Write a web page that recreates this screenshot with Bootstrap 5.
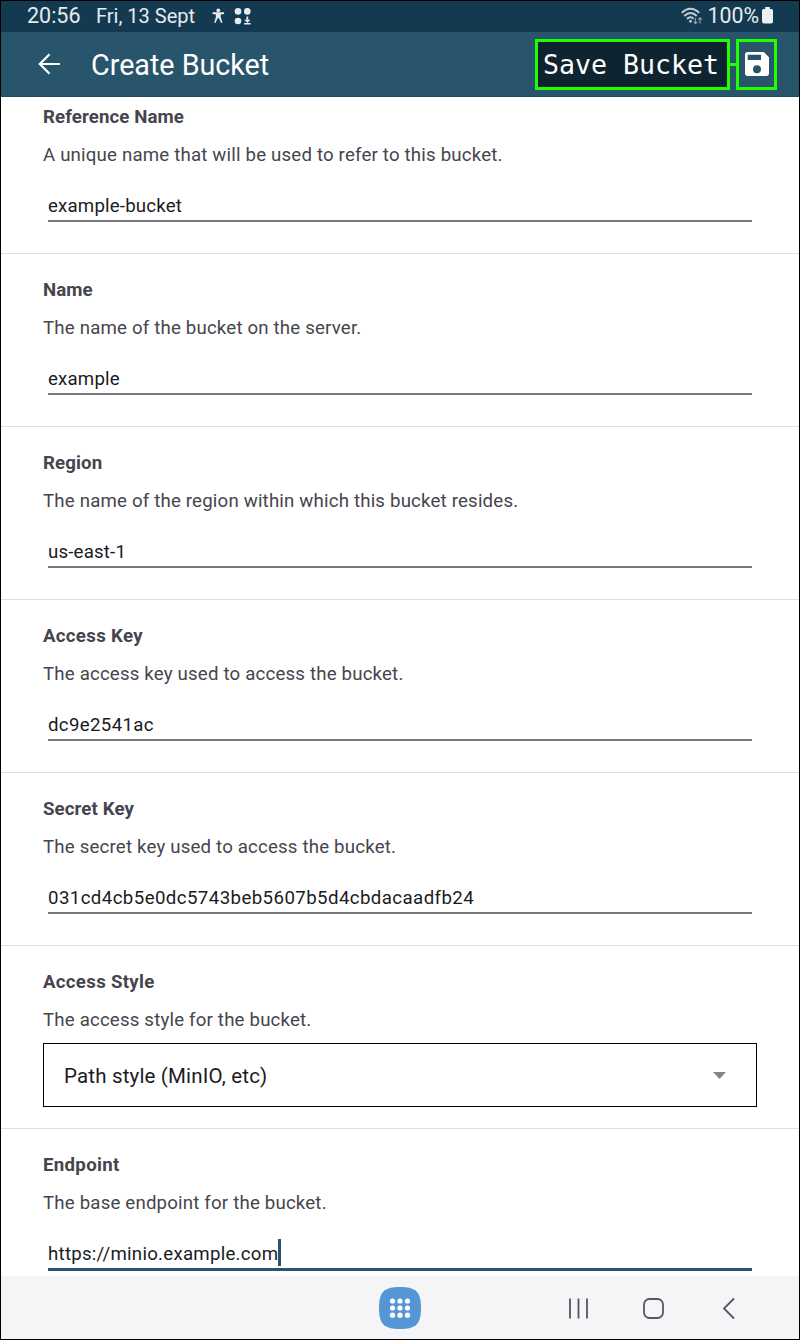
<!DOCTYPE html>
<html lang="en">
<head>
<meta charset="utf-8">
<meta name="viewport" content="width=device-width, initial-scale=1">
<title>Create Bucket</title>
<link href="https://cdn.jsdelivr.net/npm/bootstrap@5.3.0/dist/css/bootstrap.min.css" rel="stylesheet">
<style>
body{font-family:Roboto,sans-serif;background:#fff;color:#1b1b1f}
svg{display:block;flex:none}
.screen{width:800px;height:1340px;border:1px solid #000}
.status{height:31px;background:#133a50;color:#e6ebee;line-height:30px;padding:0 26px 2px}
.clock{font-size:21.5px;width:69px}
.date{width:116px;font-size:20px}
.power{font-size:21.3px}
.battery{margin-left:3px}
.appbar{height:65px;background:#29556c;border-bottom:1px solid #23495d;color:#fff;padding-left:36px;padding-right:22px}
.title{font-size:28.7px;line-height:36px;margin-left:30px;padding-top:2px}
.callout{border:3px solid #1eff00;height:51px}
.callout-text{width:195px;background:#0e2430;font:26.6px/46px "DejaVu Sans Mono",monospace;padding-left:5px}
.link-line{width:6px;height:3px;background:#1eff00}
.callout-icon{width:41px}
.setting{height:173px;border-bottom:1px solid #dfdfdf;padding:24px 42px 0}
.setting.first{height:157px;padding-top:8px}
.setting.choice{height:183px}
.setting.last{height:147px;border:0}
.name{font-weight:700;font-size:18.67px;line-height:24px;color:#46454e;letter-spacing:.1px}
.wide .name{letter-spacing:.3px}
.desc{font-size:18.67px;line-height:24px;color:#46454e;letter-spacing:.18px;margin-top:14px}
.field{margin:27px 5px 0;font-size:18.67px;line-height:24px;letter-spacing:.18px;padding:0 0 2px;border-bottom:2px solid #77767f}
.field.key{letter-spacing:.34px}
.field.secret{letter-spacing:.41px}
.last .field{border-bottom:3px solid #29556c;letter-spacing:.25px}
.caret{width:3px;height:27px;background:#29556c;margin:-3px 0 0}
.picker{height:64px;border:1px solid #000;margin-top:11px;padding:0 30px 0 20px;font-size:20.5px}
.picker span{padding-top:2px;letter-spacing:.17px}
.navbtns{height:63px;background:#f5f5f8}
</style>
</head>
<body>
<div class="screen d-flex flex-column overflow-hidden">
  <div class="status d-flex align-items-center">
    <span class="clock">20:56</span><span class="date">Fri, 13 Sept</span>
    <svg width="40" height="20" viewBox="0 0 40 20" fill="#e6ebee">
      <circle cx="6.300" cy="4.300" r="1.900"/><path d="M.5 6.300h11.600v1.600L8.700 8.500V11l1.800 5.700H8.900L7 12.300H5.600L3.700 16.700H2.100L3.900 11V8.500L.5 7.900z"/>
      <circle cx="26" cy="5.400" r="3.300"/><circle cx="35.300" cy="5.400" r="3.300"/><circle cx="26" cy="15" r="3.300"/>
      <path d="M34.400 10.500h1.800v3.300h2.200l-3.100 3.200-3.100-3.200h2.200zM32 17h6.600v1.400H32z"/>
    </svg>
    <svg class="ms-auto" width="22" height="20" viewBox="0 0 22 20" fill="none" stroke="#c5d0d6" stroke-width="1.900">
      <path d="M.8 6.900C6 1.300 13 1.300 18.200 6.900M3.300 10c3.800-4 8.600-4 12.400 0M6 13c2.200-2.300 4.800-2.300 7 0"/><circle cx="9.500" cy="15.300" r="1.400" fill="#c5d0d6" stroke="none"/>
      <path stroke="#133a50" stroke-width="3.600" d="M14.500 11.500v6M19 17.500v-6"/>
      <path stroke="#87a0ad" stroke-width="1.200" d="M14.500 12v5.500M12.700 15.900l1.800 1.800 1.800-1.800M19 17.500V12M17.200 13.700L19 11.900l1.800 1.800"/>
    </svg>
    <span class="power ms-1">100%</span>
    <svg class="battery" width="11" height="17" viewBox="0 0 11 17" fill="#eef1f3"><path d="M3.200 0h4.600v2H9.500Q11 2 11 3.500v11Q11 16.500 9 16.500H2Q0 16.500 0 14.500v-11Q0 2 1.500 2H3.200z"/></svg>
  </div>
  <header class="appbar d-flex align-items-center">
    <svg width="24" height="24" viewBox="0 0 24 24" fill="none" stroke="#fff" stroke-width="2.200"><path d="M23 12H3M12.500 2.300L2.800 12l9.700 9.700"/></svg>
    <span class="title">Create Bucket</span>
    <div class="callout callout-text ms-auto text-nowrap">Save Bucket</div>
    <div class="link-line"></div>
    <div class="callout callout-icon d-flex align-items-center justify-content-center">
      <svg width="24" height="24" viewBox="0 0 24 24" fill="#fff" fill-rule="evenodd"><path d="M2.700 0H18.700L24 5.300V21.300Q24 24 21.300 24H2.700Q0 24 0 21.300V2.700Q0 0 2.700 0zM2.700 2.700V8H16V2.700zM12 13.200a4 4 0 1 0 0 8 4 4 0 0 0 0-8z"/></svg>
    </div>
  </header>
  <main class="flex-grow-1">
    <section class="setting first"><div class="name">Reference Name</div><div class="desc">A unique name that will be used to refer to this bucket.</div><div class="field">example-bucket</div></section>
    <section class="setting"><div class="name">Name</div><div class="desc">The name of the bucket on the server.</div><div class="field">example</div></section>
    <section class="setting"><div class="name">Region</div><div class="desc">The name of the region within which this bucket resides.</div><div class="field">us-east-1</div></section>
    <section class="setting wide"><div class="name">Access Key</div><div class="desc">The access key used to access the bucket.</div><div class="field key">dc9e2541ac</div></section>
    <section class="setting"><div class="name">Secret Key</div><div class="desc">The secret key used to access the bucket.</div><div class="field secret">031cd4cb5e0dc5743beb5607b5d4cbdacaadfb24</div></section>
    <section class="setting choice wide"><div class="name">Access Style</div><div class="desc">The access style for the bucket.</div>
      <div class="picker d-flex align-items-center justify-content-between"><span>Path style (MinIO, etc)</span><svg width="13" height="7" viewBox="0 0 13 7"><path d="M0 0h13L6.500 7z" fill="#858585"/></svg></div></section>
    <section class="setting last wide"><div class="name">Endpoint</div><div class="desc">The base endpoint for the bucket.</div><div class="field d-flex"><span>https://minio.example.com</span><span class="caret"></span></div></section>
  </main>
  <nav class="navbtns d-flex">
    <svg width="798" height="63" viewBox="1 1276 798 63" fill="none" stroke="#56565a" stroke-width="1.800">
      <path d="M400 1287C416 1287 421 1292 421 1308S416 1329 400 1329 379 1324 379 1308 384 1287 400 1287z" fill="#5596d5" stroke="none"/>
      <g fill="#fff" stroke="none"><circle cx="392.500" cy="1301" r="2.600"/><circle cx="400" cy="1301" r="2.600"/><circle cx="407.500" cy="1301" r="2.600"/><circle cx="392.500" cy="1308" r="2.600"/><circle cx="400" cy="1308" r="2.600"/><circle cx="407.500" cy="1308" r="2.600"/><circle cx="392.500" cy="1315.200" r="2.600"/><circle cx="400" cy="1315.200" r="2.600"/><circle cx="407.500" cy="1315.200" r="2.600"/></g>
      <path d="M570 1298.500v20M578.500 1298.500v20M587 1298.500v20M734 1298.500L724 1308.500l10 10"/>
      <rect x="644" y="1299" width="19" height="19" rx="5.500"/>
    </svg>
  </nav>
</div>
<script src="https://cdn.jsdelivr.net/npm/bootstrap@5.3.0/dist/js/bootstrap.bundle.min.js"></script>
</body>
</html>
